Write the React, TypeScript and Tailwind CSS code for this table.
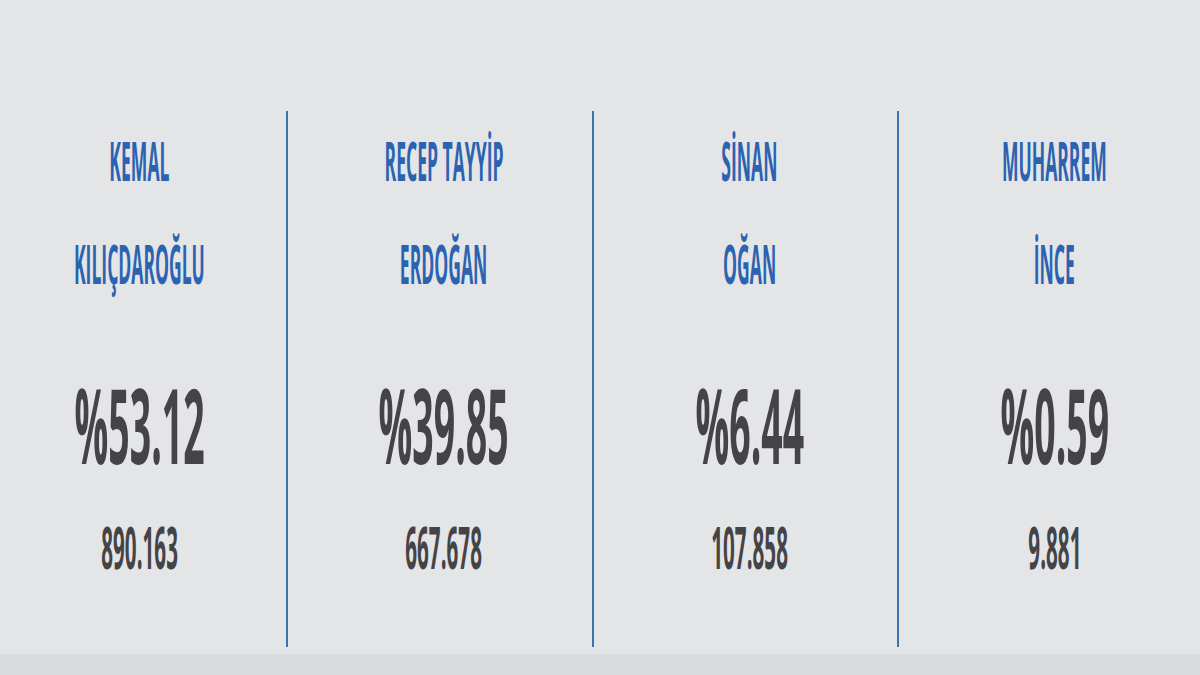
const candidates = [
  { first: "KEMAL", last: "KILIÇDAROĞLU", pct: "%53.12", votes: "890.163" },
  { first: "RECEP TAYYİP", last: "ERDOĞAN", pct: "%39.85", votes: "667.678" },
  { first: "SİNAN", last: "OĞAN", pct: "%6.44", votes: "107.858" },
  { first: "MUHARREM", last: "İNCE", pct: "%0.59", votes: "9.881" },
]

const colPad = ["pr-[7px] border-r-2", "pl-2 border-r-2", "pl-2 border-r-2", "pl-[10px]"]

export default function App() {
  return (
    <div className="w-[1200px] h-[675px] flex flex-col bg-[#e4e5e7] font-['Open_Sans',sans-serif] overflow-hidden">
      <div className="h-[654px] pt-[111px]">
        <div className="grid grid-cols-[288px_306px_305px_minmax(0,1fr)] h-[536px]">
          {candidates.map((c, i) => (
            <div key={i} className={`min-w-0 flex flex-col items-center border-[#3a74b3] ${colPad[i]}`}>
              <div className="-mt-0.5 flex flex-col items-center text-[54px] leading-[103px] font-bold text-[#2b63b1]">
                <div className="w-max scale-x-[0.325]">{c.first}</div>
                <div className="w-max scale-x-[0.325]">{c.last}</div>
              </div>
              <div className="mt-[57px] w-max text-[104px] leading-[104px] font-bold text-[#444447] scale-x-[0.36]">
                {c.pct}
              </div>
              <div className="mt-[41px] w-max text-[59px] leading-[59px] font-bold text-[#444447] scale-x-[0.35]">
                {c.votes}
              </div>
            </div>
          ))}
        </div>
      </div>
      <div className="h-[21px] bg-[#d9dcde]" />
    </div>
  )
}
